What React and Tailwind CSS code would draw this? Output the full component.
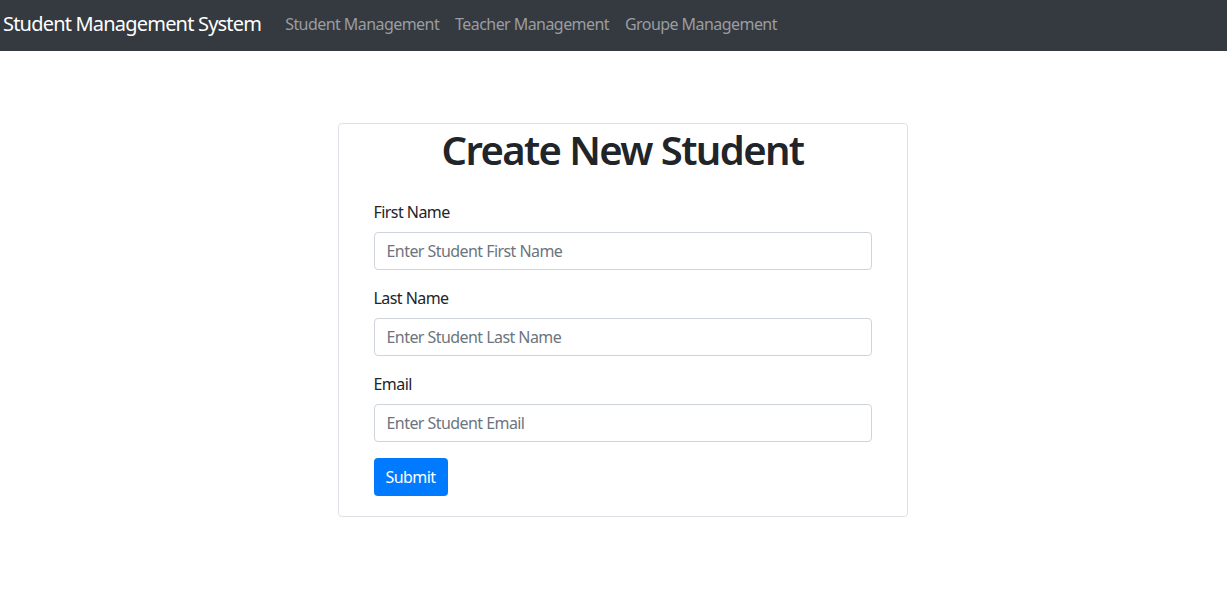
// App.jsx
import React, { useState } from 'react';

const font = { fontFamily: '"Noto Sans", "Open Sans", Arial, sans-serif', letterSpacing: '-0.035em' };

// Simple labelled input, bootstrap-ish form-group
const Field = ({ id, label, placeholder, value, onChange, type = 'text' }) => (
    <div className="mb-4">
        <label htmlFor={id} className="block text-[16px] leading-6 text-[#212529] mb-2">
            {label}
        </label>
        <input
            id={id}
            type={type}
            value={value}
            onChange={onChange}
            placeholder={placeholder}
            className="block w-full h-[38px] px-3 text-[16px] text-[#495057] placeholder:text-[#6c757d] bg-white border border-[#ced4da] rounded-[4px] outline-none"
        />
    </div>
);

const App = () => {
    const [firstName, setFirstName] = useState('');
    const [lastName, setLastName] = useState('');
    const [email, setEmail] = useState('');

    const handleSubmit = (e) => {
        e.preventDefault();
    };

    return (
        <div className="min-h-screen bg-white" style={font}>
            {/* Navbar */}
            <nav className="h-[51px] bg-[#343a40] flex items-center pl-[3px] pb-[4px]">
                <span className="text-[20px] leading-[30px] tracking-[-0.04em] text-white mr-4">Student Management System</span>
                <div className="flex">
                    <a href="#" className="px-2 text-[16px] leading-6 text-[#9a9da0]">Student Management</a>
                    <a href="#" className="px-2 text-[16px] leading-6 text-[#9a9da0]">Teacher Management</a>
                    <a href="#" className="px-2 text-[16px] leading-6 text-[#9a9da0]">Groupe Management</a>
                </div>
            </nav>

            {/* Card */}
            <div className="flex justify-center pl-[18px] mt-[72px]">
                <div className="w-[570px] border border-[#dee2e6] rounded-[4px] bg-white">
                    <h2 className="text-center text-[40px] leading-[48px] font-semibold tracking-[-0.04em] text-[#212529] mt-[2px]">
                        Create New Student
                    </h2>
                    <form onSubmit={handleSubmit} className="px-[35px] pt-[26px] pb-5">
                        <Field
                            id="firstName"
                            label="First Name"
                            placeholder="Enter Student First Name"
                            value={firstName}
                            onChange={(e) => setFirstName(e.target.value)}
                        />
                        <Field
                            id="lastName"
                            label="Last Name"
                            placeholder="Enter Student Last Name"
                            value={lastName}
                            onChange={(e) => setLastName(e.target.value)}
                        />
                        <Field
                            id="email"
                            type="email"
                            label="Email"
                            placeholder="Enter Student Email"
                            value={email}
                            onChange={(e) => setEmail(e.target.value)}
                        />
                        <button
                            type="submit"
                            className="h-[38px] px-3 bg-[#007bff] text-white text-[16px] rounded-[4px]"
                        >
                            Submit
                        </button>
                    </form>
                </div>
            </div>
        </div>
    );
};

export default App;
